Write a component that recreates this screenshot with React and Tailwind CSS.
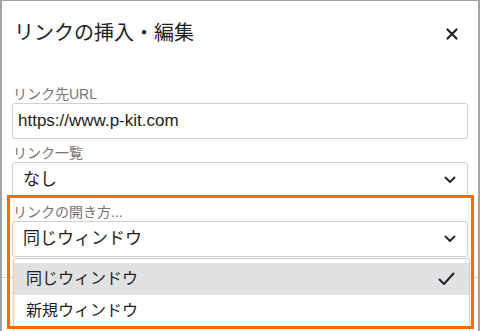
import React from "react";

const font = { fontFamily: '"Liberation Sans", "Noto Sans CJK JP", sans-serif' };

function Chevron() {
  return (
    <svg width="12" height="8" viewBox="0 0 12 8" className="text-[#1d2327]">
      <path d="M1.5 1.5 L6 6 L10.5 1.5" fill="none" stroke="currentColor" strokeWidth="1.8" strokeLinecap="round" strokeLinejoin="round" />
    </svg>
  );
}

export default function App() {
  return (
    <div
      className="relative w-[480px] h-[331px] overflow-hidden bg-white border-l-2 border-r-2 border-t border-[#a3a3a3] text-[#1e1e1e]"
      style={font}
    >
      <div className="flex items-center justify-between pl-[12px] pr-[20px] pt-[17px] h-[66px] items-start">
        <div className="text-[20px] leading-[30px] text-[#1e1e1e]">リンクの挿入・編集</div>
        <svg width="12" height="12" viewBox="0 0 12 12" className="mt-[10px]">
          <path d="M1.5 1.5 L10.5 10.5 M10.5 1.5 L1.5 10.5" stroke="#1d2327" strokeWidth="2.2" strokeLinecap="round" />
        </svg>
      </div>
      <div className="px-[10px] pt-[18px]">
        <div className="text-[14px] leading-[18px] text-[#757575] pl-[1px]">リンク先URL</div>
        <div className="h-[36px] border border-[#d0d0d0] rounded-[3px] flex items-center pl-[5px] text-[17px]">
          https://www.p-kit.com
        </div>
        <div className="mt-[5px] text-[14px] leading-[18px] text-[#757575] pl-[1px]">リンク一覧</div>
        <div className="h-[36px] border border-[#d0d0d0] rounded-[3px] flex items-center justify-between pl-[10px] pr-[11px] text-[17px]">
          <span>なし</span>
          <Chevron />
        </div>
        <div className="mt-[5px] text-[14px] leading-[18px] text-[#757575] pl-[1px]">リンクの開き方...</div>
        <div className="h-[36px] border border-[#d0d0d0] rounded-[3px] flex items-center justify-between pl-[10px] pr-[11px] text-[17px]">
          <span>同じウィンドウ</span>
          <Chevron />
        </div>
      </div>
      <div className="mt-[20px] border-t border-[#d6d6d6]" />

      <div className="absolute left-[11px] top-[257px] w-[457px] h-[80px] bg-white border border-[#d0d0d0] rounded-[3px] shadow-[0_1px_3px_rgba(0,0,0,0.12)] pt-[4px]">
        <div className="h-[32px] bg-[#e1e2e4] flex items-center justify-between pl-[12px] pr-[14px] text-[16px]">
          <span>同じウィンドウ</span>
          <svg width="17" height="14" viewBox="0 0 17 14">
            <path d="M1.5 7.5 L6 12 L15.5 1.5" fill="none" stroke="#1d2327" strokeWidth="2" strokeLinecap="round" strokeLinejoin="round" />
          </svg>
        </div>
        <div className="h-[32px] flex items-center pl-[12px] text-[16px]">
          <span>新規ウィンドウ</span>
        </div>
      </div>

      <div className="absolute left-[5px] top-[194px] w-[467px] h-[134px] border-[3px] border-[#ff6a00]" />
    </div>
  );
}
